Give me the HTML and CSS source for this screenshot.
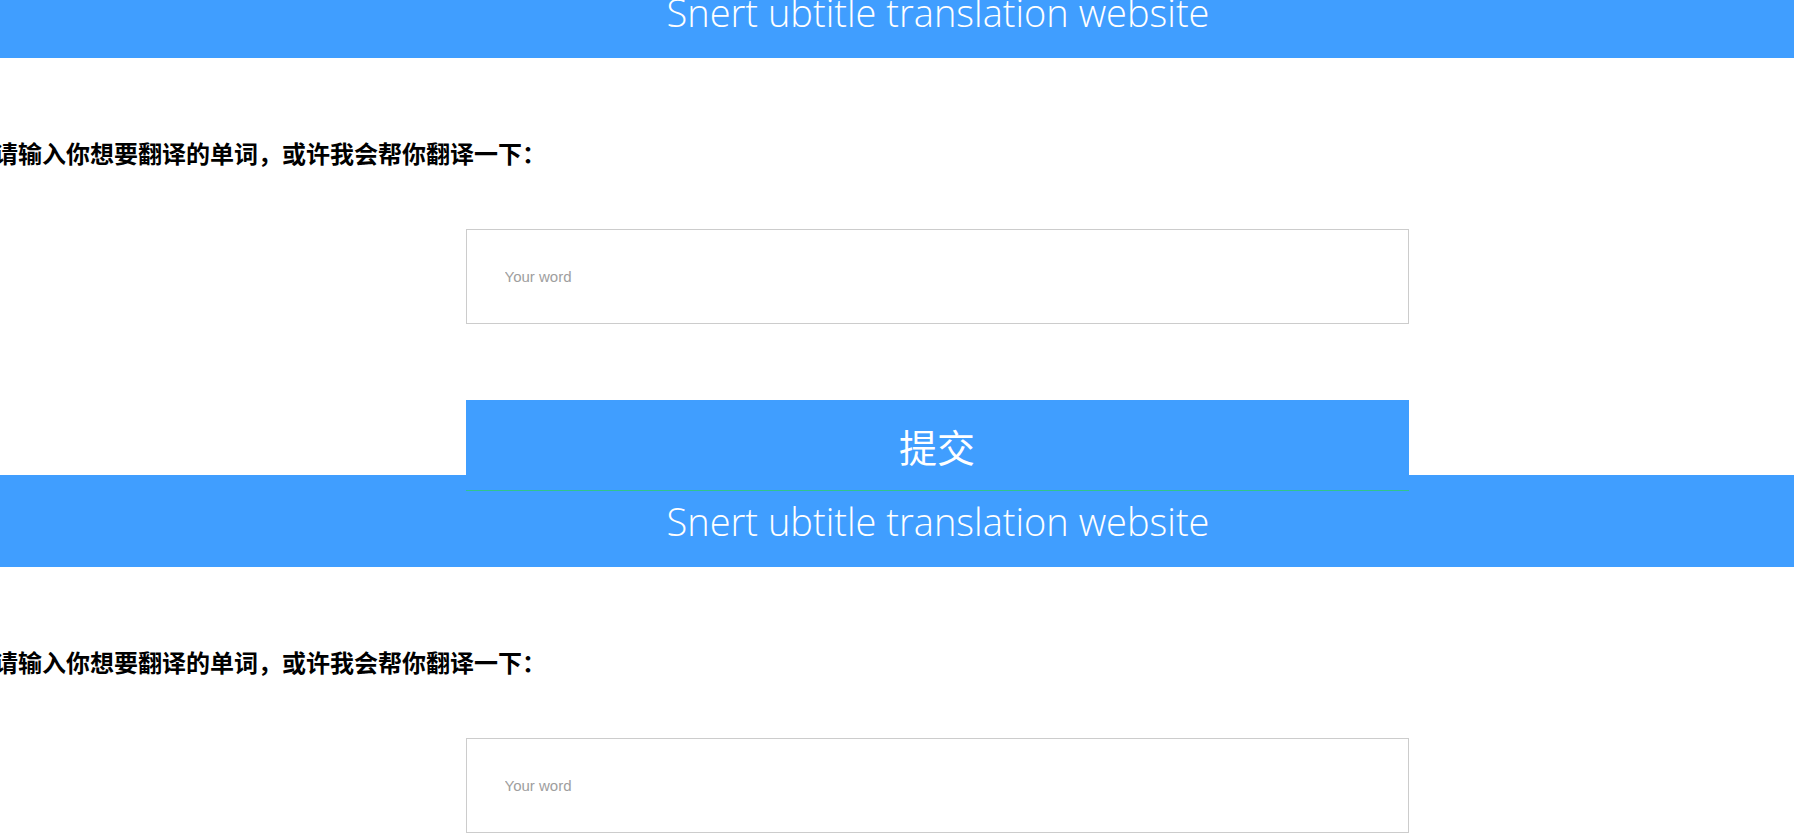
FILE: index.html
```html
<!DOCTYPE html>
<html lang="zh-CN">
<head>
<meta charset="utf-8">
<title>Snert ubtitle translation website</title>
<link rel="stylesheet" href="styles.css">
</head>
<body>
<div class="page">
  <section class="block">
    <header class="topbar"><h1 class="title">Snert ubtitle translation website</h1></header>
    <p class="prompt">请输入你想要翻译的单词，或许我会帮你翻译一下：</p>
    <form class="form">
      <input class="word" type="text" placeholder="Your word">
      <button class="submit" type="button">提交</button>
    </form>
  </section>
  <section class="block">
    <header class="topbar"><h1 class="title">Snert ubtitle translation website</h1></header>
    <p class="prompt">请输入你想要翻译的单词，或许我会帮你翻译一下：</p>
    <form class="form">
      <input class="word" type="text" placeholder="Your word">
      <button class="submit" type="button">提交</button>
    </form>
  </section>
</div>
</body>
</html>
```
FILE: styles.css
```css
html, body {
  margin: 0;
  padding: 0;
  background: #ffffff;
  overflow: hidden;
}

.page {
  margin-top: -34px;
  display: flex;
  flex-direction: column;
}

.block {
  display: flex;
  flex-direction: column;
}

.topbar {
  height: 92px;
  background: #409eff;
  display: flex;
  align-items: center;
  justify-content: center;
  padding-left: 80px;
}

.title {
  margin: 0;
  color: #ffffff;
  font-family: "Open Sans", "Noto Sans", sans-serif;
  font-weight: 300;
  font-size: 38px;
  line-height: 1;
  padding-left: 2px;
}

.prompt {
  margin: 78px 0 0 -6px;
  font-family: "Noto Sans CJK SC", sans-serif;
  font-weight: 700;
  font-size: 24px;
  line-height: 34px;
  color: #000000;
}

.form {
  display: flex;
  flex-direction: column;
  align-items: center;
  padding-left: 80px;
  margin: 0;
}

.word {
  box-sizing: border-box;
  width: 943px;
  height: 95px;
  margin-top: 59px;
  border: 1px solid #cccccc;
  border-radius: 0;
  padding: 0 0 0 38px;
  font-family: "Liberation Sans", Arial, sans-serif;
  font-size: 15px;
  color: #333;
  outline: none;
}

.word::placeholder {
  color: #9e9e9e;
}

.submit {
  position: relative;
  z-index: 1;
  box-sizing: border-box;
  width: 943px;
  height: 91px;
  margin-top: 76px;
  margin-bottom: -16px;
  border: 0;
  border-bottom: 1px solid #30c48d;
  background: #409eff;
  color: #ffffff;
  font-family: "Noto Sans CJK SC", sans-serif;
  font-weight: 400;
  font-size: 38px;
  padding: 0;
  cursor: pointer;
}
```
